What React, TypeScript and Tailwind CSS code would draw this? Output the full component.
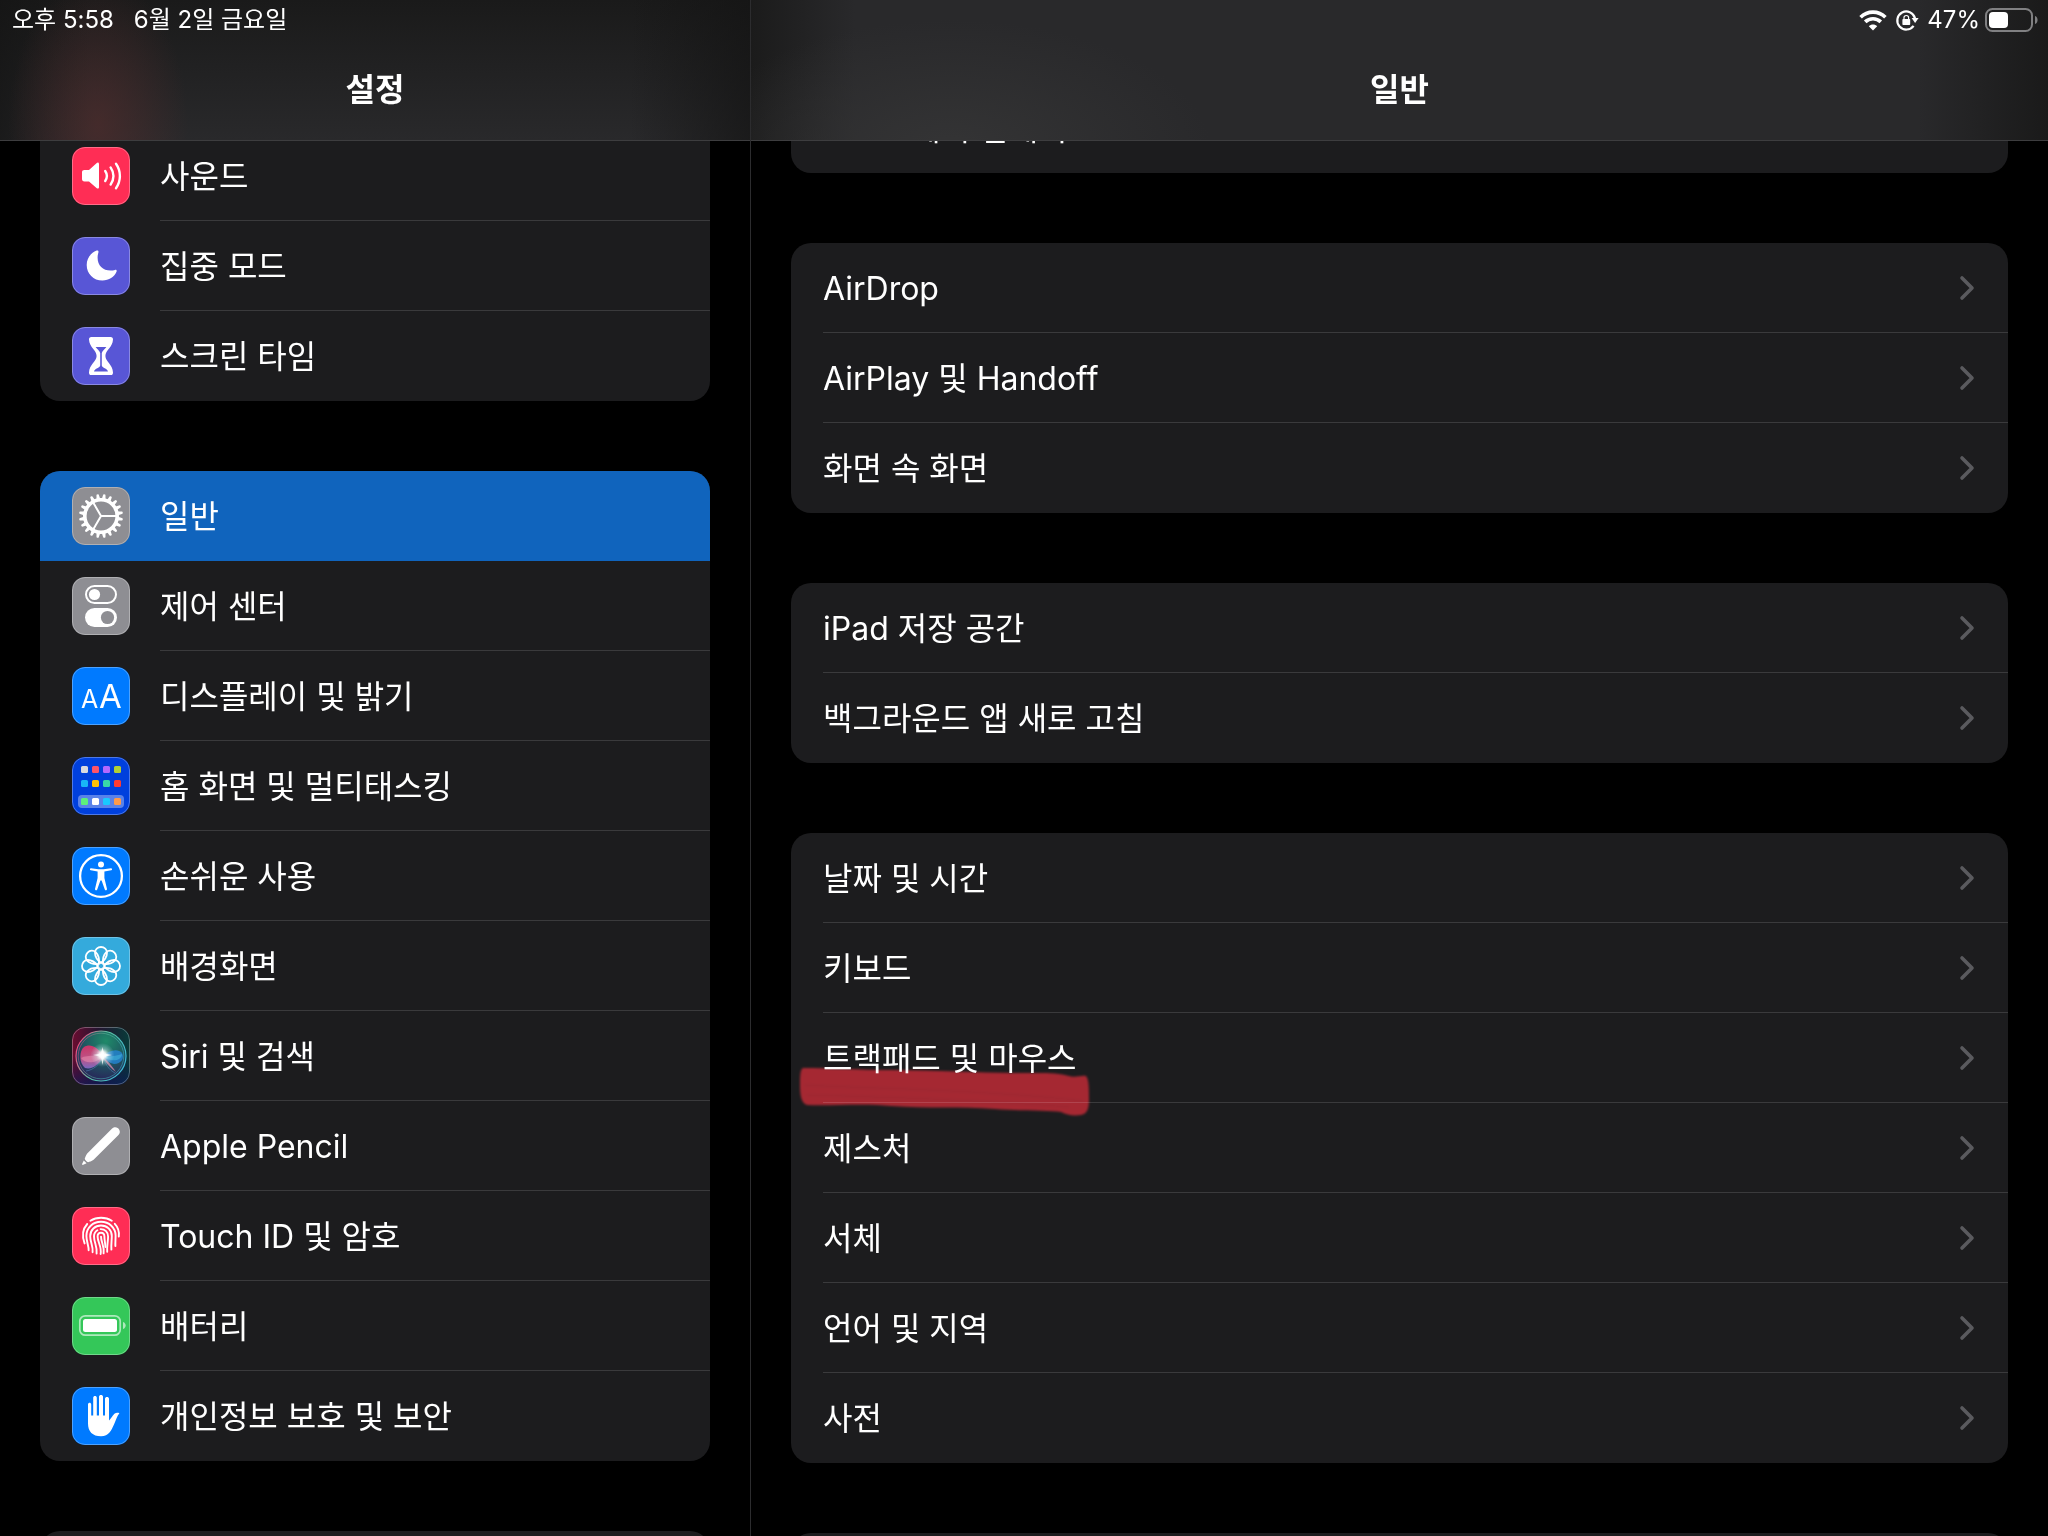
import React, { useState } from 'react';
import { clsx } from 'clsx';

interface SidebarItem {
  id: string;
  label: string;
  color: string;
  icon: React.ReactNode;
}

const HOME_SCREEN_APPS = [
  { y: 9, colors: ['#d9d9de', '#ff5468', '#b368ff', '#b0d136'] },
  { y: 23, colors: ['#18b7f7', '#ffc107', '#38d6a8', '#ff3b30'] },
  { y: 41, colors: ['#5df07a', '#ffffff', '#19c8ff', '#ff9a4a'] },
];

const GEAR_TEETH = Array.from({ length: 20 }, (_, i) => i * 18);
const PETALS = Array.from({ length: 8 }, (_, i) => i * 45);

function Glyph({ children }: { children: React.ReactNode }) {
  return (
    <svg viewBox="0 0 58 58" className="absolute inset-0 h-full w-full" fill="none" aria-hidden="true">
      {children}
    </svg>
  );
}

const SoundGlyph = () => (
  <Glyph>
    <path d="M12.5 23H17L24.5 16.2C25.8 15.1 27 15.6 27 17.2V40C27 41.6 25.8 42.1 24.5 41L17 34.4H12.5C10.8 34.4 10 33.6 10 32V25.4C10 23.8 10.8 23 12.5 23Z" fill="#fff" />
    <g stroke="#fff" strokeWidth="2.4" strokeLinecap="round">
      <path d="M33.2 24C35.4 27.2 35.4 30.8 33.2 34" />
      <path d="M38.6 20.4C42.2 25.8 42.2 32.2 38.6 37.6" />
      <path d="M44 16.8C49.2 24.2 49.2 33.8 44 41.2" />
    </g>
  </Glyph>
);

const MoonGlyph = () => (
  <Glyph>
    <path
      d="M24.6 13.6C18.6 16 14.7 21.4 14.7 28C14.7 36.8 21.5 43.6 30.4 43.6C37 43.6 42.4 40 44.6 34.6C45 33.4 44.2 32.5 43 32.9C41.6 33.4 40.2 33.6 38.6 33.6C30.8 33.6 25.6 28.6 25.6 20.8C25.6 18.8 25.9 17 26.4 15.4C26.8 13.9 25.9 13.1 24.6 13.6Z"
      fill="#fff"
    />
  </Glyph>
);

const HourglassGlyph = () => (
  <Glyph>
    <path
      d="M19.5 10H38.5C40.4 10 41 11 41 12.6C40.7 20.4 33.4 23.4 33.4 29C33.4 34.6 40.7 37.6 41 45.4C41 47 40.4 48 38.5 48H19.5C17.6 48 17 47 17 45.4C17.3 37.6 24.6 34.6 24.6 29C24.6 23.4 17.3 20.4 17 12.6C17 11 17.6 10 19.5 10Z"
      fill="#fff"
    />
    <path d="M23.6 20H34.4C33 22.4 30.2 23.6 29.8 26V38.6C30.4 41.4 35 41 36 44.6H22C23 41 27.6 41.4 28.2 38.6V26C27.8 23.6 25 22.4 23.6 20Z" fill="#5856d6" />
  </Glyph>
);

const GearGlyph = () => (
  <Glyph>
    <circle cx="29" cy="29" r="16.2" stroke="#fff" strokeWidth="3.6" />
    {GEAR_TEETH.map((angle) => (
      <path key={angle} d="M27 12.6L27.9 7.4Q29 6.4 30.1 7.4L31 12.6Z" fill="#fff" transform={`rotate(${angle + 9} 29 29)`} />
    ))}
    <path d="M29 29H44.5M29 29L21.2 15.6M29 29L21.2 42.4" stroke="#fff" strokeWidth="2" />
  </Glyph>
);

const ControlCenterGlyph = () => (
  <Glyph>
    <rect x="14" y="9" width="30" height="17" rx="8.5" stroke="#fff" strokeWidth="2" />
    <circle cx="22.5" cy="17.5" r="5.6" fill="#fff" />
    <rect x="13" y="31" width="32" height="19" rx="9.5" fill="#fff" />
    <circle cx="35.5" cy="40.5" r="6.6" fill="#8e8e93" />
  </Glyph>
);

const DisplayGlyph = () => (
  <Glyph>
    <g fill="#fff" fontFamily="Inter, sans-serif" fontWeight="400">
      <text x="9" y="41" fontSize="25">A</text>
      <text x="27" y="41" fontSize="33">A</text>
    </g>
  </Glyph>
);

const HomeScreenGlyph = () => (
  <Glyph>
    <rect x="6" y="38" width="46" height="13" rx="4" fill="#fff" fillOpacity="0.35" />
    {HOME_SCREEN_APPS.map((row) =>
      row.colors.map((color, i) => (
        <rect key={color} x={9 + i * 11} y={row.y} width="7" height="7" rx="1.5" fill={color} />
      )),
    )}
  </Glyph>
);

const AccessibilityGlyph = () => (
  <Glyph>
    <circle cx="29" cy="29" r="20.9" stroke="#fff" strokeWidth="2.3" />
    <circle cx="29" cy="17.6" r="3" fill="#fff" />
    <path
      d="M19 21.2L26.4 22.2H31.6L39 21.2C40.4 21.2 40.4 23 39.2 23.3L32.4 24.6V31L35 42C35 43.4 33.3 43.8 32.8 42.4L29.6 33.6H28.4L25.2 42.4C24.7 43.8 23 43.4 23 42L25.6 31V24.6L18.8 23.3C17.6 23 17.6 21.2 19 21.2Z"
      fill="#fff"
    />
  </Glyph>
);

const WallpaperGlyph = () => (
  <Glyph>
    {PETALS.map((angle) => (
      <path
        key={angle}
        d="M29 26C25.6 23.4 23 19.4 23 15.8C23 12.4 25.7 10 29 10C32.3 10 35 12.4 35 15.8C35 19.4 32.4 23.4 29 26Z"
        stroke="#fff"
        strokeWidth="1.8"
        transform={`rotate(${angle} 29 29)`}
      />
    ))}
    <circle cx="29" cy="29" r="3.6" stroke="#fff" strokeWidth="1.6" />
  </Glyph>
);

const SiriGlyph = () => (
  <Glyph>
    <defs>
      <linearGradient id="siri-bg" x1="0" y1="0" x2="1" y2="0">
        <stop offset="0" stopColor="#6c0c30" />
        <stop offset="0.45" stopColor="#241430" />
        <stop offset="1" stopColor="#073c3a" />
      </linearGradient>
      <linearGradient id="siri-base" x1="0" y1="0" x2="0" y2="1">
        <stop offset="0.5" stopColor="#0a1240" stopOpacity="0" />
        <stop offset="1" stopColor="#0a1a5c" stopOpacity="0.7" />
      </linearGradient>
      <linearGradient id="siri-ring" x1="0" y1="0.3" x2="1" y2="0.7">
        <stop offset="0" stopColor="#f2467f" />
        <stop offset="0.45" stopColor="#5ec6a4" />
        <stop offset="1" stopColor="#3ab8d8" />
      </linearGradient>
      <radialGradient id="siri-orb" cx="0.6" cy="0.2" r="0.9">
        <stop offset="0" stopColor="#1f8a69" />
        <stop offset="0.5" stopColor="#1f5560" />
        <stop offset="1" stopColor="#2a1858" />
      </radialGradient>
      <linearGradient id="siri-pink" x1="0" y1="0" x2="0" y2="1">
        <stop offset="0" stopColor="#e62e68" />
        <stop offset="0.6" stopColor="#d8578f" />
        <stop offset="1" stopColor="#8a6fd0" />
      </linearGradient>
      <radialGradient id="siri-glow">
        <stop offset="0" stopColor="#fff" />
        <stop offset="0.28" stopColor="#fff" stopOpacity="0.9" />
        <stop offset="0.55" stopColor="#d9f2f4" stopOpacity="0.4" />
        <stop offset="1" stopColor="#bfe6ff" stopOpacity="0" />
      </radialGradient>
    </defs>
    <rect width="58" height="58" fill="url(#siri-bg)" />
    <rect width="58" height="58" fill="url(#siri-base)" />
    <circle cx="29" cy="29" r="25" fill="url(#siri-orb)" stroke="url(#siri-ring)" strokeWidth="1.2" />
    <circle cx="29" cy="29" r="22.8" stroke="url(#siri-ring)" strokeWidth="0.7" opacity="0.7" />
    <path d="M31 29C26 20 18 16 12 20C7 24 7 36 13 41C20 43 27 38 31 29Z" fill="url(#siri-pink)" fillOpacity="0.85" />
    <path d="M9 31C15 28 24 29 31 29C25 36 14 38 9 31Z" fill="#f59bbb" fillOpacity="0.45" />
    <path d="M31 29C37 23 46 21 50 26C53 31 49 37 42 37C37 36 34 33 31 29Z" fill="#2484d4" fillOpacity="0.8" />
    <path d="M31 29C37 30 44 29 50 27C50 34 38 36 31 29Z" fill="#3fb2d8" fillOpacity="0.6" />
    <path d="M31 30C36 34 40 39 44 45C40 42 34 37 31 30Z" fill="#e98fb5" fillOpacity="0.7" />
    <path d="M14 44C21 43 28 38 31 29C33 37 37 43 43 46" stroke="#6c9fe0" strokeOpacity="0.5" strokeWidth="0.8" />
    <circle cx="30.5" cy="28" r="12" fill="url(#siri-glow)" />
    <path d="M30.5 20L32 26.5L40 28L32 29.8L30.5 38L29 29.8L21 28L29 26.5Z" fill="#fff" fillOpacity="0.8" />
  </Glyph>
);

const PencilGlyph = () => (
  <Glyph>
    <g transform="translate(29 29) rotate(-45)" fill="#fff">
      <path d="M-15 -4.5H20.2C26.2 -4.5 26.2 4.5 20.2 4.5H-15C-17.6 4 -19.4 3 -20.6 2.4C-21.4 1.2 -21.4 -1.2 -20.6 -2.4C-19.4 -3 -17.6 -4 -15 -4.5Z" />
      <path d="M-22.4 -2L-26.4 -0.5V0.5L-22.4 2Z" />
    </g>
  </Glyph>
);

const TouchIdGlyph = () => (
  <Glyph>
    <g stroke="#fff" strokeWidth="1.9" strokeLinecap="round">
      <path d="M18.4 13.8C24.6 9.8 33.6 9.8 39.8 13.8" />
      <path d="M12.6 36.4C10 29.4 10.4 22.4 15.2 17" />
      <path d="M42.8 16.8C46.4 20.6 47.4 25 46.8 29.6" />
      <path d="M16.6 43.2C17 39.6 14.4 34.6 14.4 29C14.4 20.6 21 14.8 29 14.8C37 14.8 43.6 20.6 43.6 28.6C43.6 32.4 43.2 35.6 43.4 39" />
      <path d="M20.6 45.2C21.4 39.6 18.2 35.4 18.2 29.2C18.2 22.8 23 18.5 29 18.5C35 18.5 39.8 22.8 39.8 29C39.8 34 39 37.6 39.4 42.6" />
      <path d="M24.6 46.6C25.6 40 22 35.4 22 29.4C22 26.6 23.4 24.4 25.4 23.2" />
      <path d="M28.6 22.1C33 22 36.1 25.2 36.1 29.4C36.1 35 34.8 38 35.2 44.8" />
      <path d="M28.6 47C30 39.6 25.6 35.6 25.6 29.6C25.6 27.2 27 25.8 29 25.8C31 25.8 32.4 27.2 32.4 29.6C32.4 34 33.4 36 33.4 40" />
      <path d="M29 29.6C29 35.6 32.6 38.6 31.6 46.4" />
    </g>
  </Glyph>
);

const BatteryGlyph = () => (
  <Glyph>
    <rect x="7.8" y="18.8" width="40.4" height="19.4" rx="5.5" stroke="#fff" strokeOpacity="0.6" strokeWidth="1.7" />
    <rect x="11" y="22" width="34" height="13" rx="2.5" fill="#fff" />
    <path d="M51 25C54.6 26.2 54.6 30.8 51 32Z" fill="#fff" fillOpacity="0.6" />
  </Glyph>
);

const HandGlyph = () => (
  <Glyph>
    <path
      d="M16 17.4C16 15.2 19.2 15.2 19.2 17.4V28.6H21.2V10.8C21.2 8.4 24.8 8.4 24.8 10.8V28.6H27V9.8C27 7.4 31 7.4 31 9.8V28.6H33V11.8C33 9.4 37 9.4 37 11.8V33.6C38.4 32.6 40.4 28.6 42.4 26.8C44 25.5 46 25.6 47.4 26.2C45 29 44 33 42 37.4C39.4 43 37 49.2 29 49.2C20.6 49.2 16 44.4 16 36.4Z"
      fill="#fff"
    />
  </Glyph>
);

const notificationItems: SidebarItem[] = [
  { id: 'sound', label: '사운드', color: 'bg-[#ff2d55]', icon: <SoundGlyph /> },
  { id: 'focus', label: '집중 모드', color: 'bg-[#5856d6]', icon: <MoonGlyph /> },
  { id: 'screen-time', label: '스크린 타임', color: 'bg-[#5856d6]', icon: <HourglassGlyph /> },
];

const deviceItems: SidebarItem[] = [
  { id: 'general', label: '일반', color: 'bg-[#8e8e93]', icon: <GearGlyph /> },
  { id: 'control-center', label: '제어 센터', color: 'bg-[#8e8e93]', icon: <ControlCenterGlyph /> },
  { id: 'display', label: '디스플레이 및 밝기', color: 'bg-[#007aff]', icon: <DisplayGlyph /> },
  { id: 'home', label: '홈 화면 및 멀티태스킹', color: 'bg-[#0040dd]', icon: <HomeScreenGlyph /> },
  { id: 'accessibility', label: '손쉬운 사용', color: 'bg-[#007aff]', icon: <AccessibilityGlyph /> },
  { id: 'wallpaper', label: '배경화면', color: 'bg-[#34aadc]', icon: <WallpaperGlyph /> },
  { id: 'siri', label: 'Siri 및 검색', color: 'bg-[#241430]', icon: <SiriGlyph /> },
  { id: 'pencil', label: 'Apple Pencil', color: 'bg-[#8e8e93]', icon: <PencilGlyph /> },
  { id: 'touch-id', label: 'Touch ID 및 암호', color: 'bg-[#ff2d55]', icon: <TouchIdGlyph /> },
  { id: 'battery', label: '배터리', color: 'bg-[#34c759]', icon: <BatteryGlyph /> },
  { id: 'privacy', label: '개인정보 보호 및 보안', color: 'bg-[#007aff]', icon: <HandGlyph /> },
];

const generalGroups = [
  ['소프트웨어 업데이트'],
  ['AirDrop', 'AirPlay 및 Handoff', '화면 속 화면'],
  ['iPad 저장 공간', '백그라운드 앱 새로 고침'],
  ['날짜 및 시간', '키보드', '트랙패드 및 마우스', '제스처', '서체', '언어 및 지역', '사전'],
];

const HIGHLIGHTED = '트랙패드 및 마우스';

function StatusBar() {
  return (
    <div className="absolute inset-x-0 top-0 z-20 flex h-10 items-center justify-between pl-3 pr-2 text-[24px]">
      <div className="flex items-center gap-5">
        <span>오후 5:58</span>
        <span>6월 2일 금요일</span>
      </div>
      <div className="flex items-center">
        <svg width="28" height="22" viewBox="0 0 28 22" fill="none" aria-label="Wi-Fi">
          <g stroke="#fff" strokeWidth="3.6">
            <path d="M1.6 8.2C8.4 1.4 19.6 1.4 26.4 8.2" />
            <path d="M6.2 12.9C10.6 8.6 17.4 8.6 21.8 12.9" />
          </g>
          <path d="M14 21.4L9.8 17.2C12 14.9 16 14.9 18.2 17.2Z" fill="#fff" />
        </svg>
        <svg className="ml-2" width="24" height="22" viewBox="0 0 24 22" fill="none" aria-label="화면 방향 잠금">
          <path d="M18.6 16.8A9 9 0 1 1 20 9.2" stroke="#fff" strokeWidth="2.2" />
          <path d="M16.6 9H23.6L20.1 14Z" fill="#fff" />
          <rect x="7.4" y="10" width="7.8" height="6" rx="0.8" fill="#fff" />
          <path d="M9 10.4V8.6C9 5.8 13.6 5.8 13.6 8.6V10.4" stroke="#fff" strokeWidth="1.2" />
        </svg>
        <span className="ml-2">47%</span>
        <svg className="ml-1" width="56" height="26" viewBox="0 0 56 26" fill="none" aria-label="배터리">
          <rect x="2" y="2" width="46" height="22" rx="6.5" stroke="#808082" strokeWidth="2" />
          <rect x="5" y="5" width="19" height="16" rx="4" fill="#fff" />
          <path d="M51 9C54.4 10 54.4 16 51 17Z" fill="#808082" />
        </svg>
      </div>
    </div>
  );
}

function SidebarGroup({
  items,
  selected,
  onSelect,
}: {
  items: SidebarItem[];
  selected: string;
  onSelect: (id: string) => void;
}) {
  return (
    <ul className="shrink-0 overflow-hidden rounded-[20px] bg-[#1c1c1e] first:rounded-t-none">
      {items.map((item, index) => {
        const isSelected = item.id === selected;
        const isLast = index === items.length - 1;
        return (
          <li key={item.id}>
            <button
              type="button"
              onClick={() => onSelect(item.id)}
              className={clsx('flex h-[90px] w-full items-stretch gap-[30px] pl-8 text-left', isSelected && 'bg-[#1064bd]')}
            >
              <span className={clsx('relative h-[58px] w-[58px] shrink-0 self-center overflow-hidden rounded-[13px]', item.color)}>
                {item.icon}
                <span className="absolute inset-0 rounded-[13px] border border-white/30" />
              </span>
              <span
                className={clsx(
                  'flex flex-1 items-center border-b pt-[3px]',
                  isSelected || isLast ? 'border-transparent' : 'border-[#3a3a3c]',
                )}
              >
                {item.label}
              </span>
            </button>
          </li>
        );
      })}
    </ul>
  );
}

// Red marker stroke drawn over the row
function MarkerStroke() {
  return (
    <svg
      className="pointer-events-none absolute left-2 top-[52px] z-10 mix-blend-screen blur-[1px]"
      width="294"
      height="54"
      viewBox="0 0 294 54"
      aria-hidden="true"
    >
      <path
        d="M4 3C30 3 60 5 92 5C140 5 180 8 214 8C240 8 258 7 270 11C276 13 282 10 287 11C290 14 290 24 290 34C290 42 289 49 282 50C274 51 268 50 262 47C250 45 220 46 196 44C160 41 130 44 92 41C66 38 34 41 8 40C2 38 1 30 1 20C1 12 1 4 4 3Z"
        fill="#9a0d17"
      />
      <path d="M6 20C70 24 180 24 284 36M8 30C80 32 170 34 270 42" stroke="#8e0d17" strokeWidth="2" fill="none" opacity="0.6" />
    </svg>
  );
}

function SettingsGroup({ labels }: { labels: string[] }) {
  return (
    <ul className="shrink-0 rounded-[20px] bg-[#1c1c1e]">
      {labels.map((label, index) => (
        <li key={label} className="relative">
          <button type="button" className="flex h-[90px] w-full items-stretch pl-8 text-left">
            <span
              className={clsx(
                'flex flex-1 items-center justify-between border-b pr-[33px]',
                index === labels.length - 1 ? 'border-transparent' : 'border-[#3a3a3c]',
              )}
            >
              <span className="pt-[3px]">{label}</span>
              <svg width="16" height="26" viewBox="0 0 16 26" fill="none" aria-hidden="true">
                <path d="M3 3L13 13L3 23" stroke="#5a5a5e" strokeWidth="3.6" strokeLinecap="round" strokeLinejoin="round" />
              </svg>
            </span>
          </button>
          {label === HIGHLIGHTED && <MarkerStroke />}
        </li>
      ))}
    </ul>
  );
}

export default function App() {
  const [selected, setSelected] = useState('general');

  return (
    <div
      lang="ko"
      className="relative flex h-screen overflow-hidden bg-black font-['Inter','Noto_Sans_CJK_KR',sans-serif] text-[32px] leading-10 text-white"
    >
      <StatusBar />

      {/* Sidebar */}
      <aside className="flex w-[751px] shrink-0 flex-col border-r border-[#2c2c2e]">
        <header className="relative z-10 flex h-[141px] shrink-0 items-center justify-center border-b border-[#3d3d3f] bg-[radial-gradient(ellipse_90px_150px_at_98px_125px,rgba(80,44,44,0.7),transparent),linear-gradient(to_right,rgba(20,20,20,0.7),transparent_12%,transparent_84%,rgba(20,20,20,0.7)),linear-gradient(to_bottom,#1a1a1a,#29292b)] pt-10">
          <h1 className="text-[32px] font-semibold">설정</h1>
        </header>
        <nav className="-mt-[10px] flex flex-col gap-[70px] px-10">
          <SidebarGroup items={notificationItems} selected={selected} onSelect={setSelected} />
          <SidebarGroup items={deviceItems} selected={selected} onSelect={setSelected} />
          <div className="h-[90px] shrink-0 rounded-[20px] bg-[#1c1c1e]" />
        </nav>
      </aside>

      {/* Detail */}
      <main className="flex flex-1 flex-col">
        <header className="relative z-10 flex h-[141px] shrink-0 items-center justify-center border-b border-[#3d3d3f] bg-[radial-gradient(ellipse_260px_130px_at_200px_150px,#343435,transparent),linear-gradient(to_right,#1b1b1b,#29292b_8%,#29292b_90%,#1a1a1a)] pt-10">
          <h2 className="text-[32px] font-semibold">일반</h2>
        </header>
        <div className="-mt-[58px] flex flex-col gap-[70px] px-10">
          {generalGroups.map((labels) => (
            <SettingsGroup key={labels[0]} labels={labels} />
          ))}
          <div className="h-[90px] shrink-0 rounded-[20px] bg-[#1c1c1e]" />
        </div>
      </main>
    </div>
  );
}
